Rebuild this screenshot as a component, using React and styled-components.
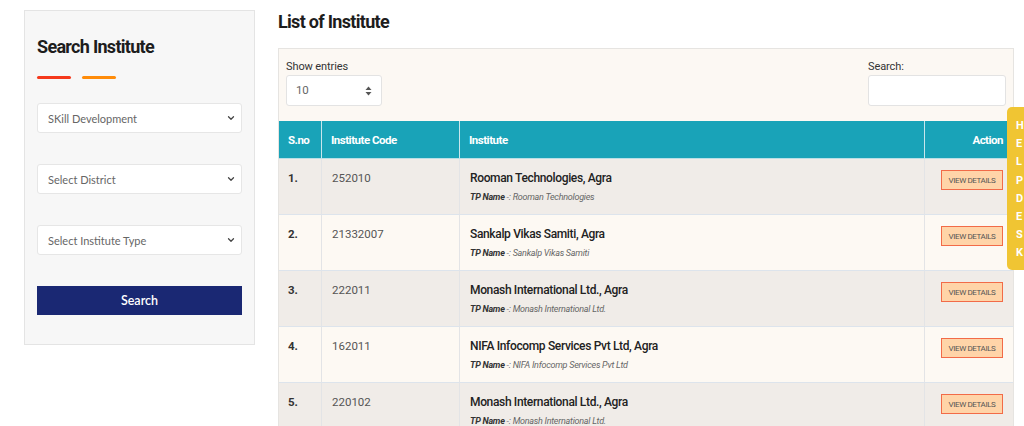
import React from "react";
import styled, { createGlobalStyle } from "styled-components";
import { ChevronDown } from "lucide-react";

const Global = createGlobalStyle`
  html, body { margin: 0; padding: 0; background: #fff; overflow: hidden; }
  body { font-family: Roboto, "Liberation Sans", sans-serif; color: #333; }
  * { box-sizing: border-box; }
`;

const Page = styled.div`
  display: flex;
  align-items: flex-start;
  gap: 23px;
  padding-left: 24px;
  width: 1024px;
`;

const Sidebar = styled.aside`
  margin-top: 10px;
  width: 231px;
  height: 335px;
  background: #f7f7f7;
  border: 1px solid #e4e4e4;
  padding: 25px 11px 0 12px;
  display: flex;
  flex-direction: column;
`;

const Heading = styled.h2`
  margin: 0;
  font-family: Roboto, sans-serif;
  font-weight: 700;
  font-size: 18px;
  line-height: 21px;
  letter-spacing: -0.7px;
  color: #1d1d1d;
`;

const Underlines = styled.div`
  display: flex;
  gap: 11px;
  margin-top: 19px;
  margin-bottom: 24px;
`;

const Dash = styled.span`
  display: block;
  width: 34px;
  height: 3px;
  border-radius: 2px;
  background: ${(p) => p.$color};
`;

const Fields = styled.div`
  display: flex;
  flex-direction: column;
  gap: 31px;
`;

const SelectWrap = styled.div`
  position: relative;
  width: 205px;
  height: 30px;
`;

const Select = styled.div`
  height: 30px;
  background: #fff;
  border: 1px solid #e6e6e6;
  border-radius: 3px;
  padding: 0 10px;
  display: flex;
  align-items: center;
  font-family: Lato, "Open Sans", sans-serif;
  font-size: 11px;
  color: #666;
`;

const Chevron = styled(ChevronDown)`
  position: absolute;
  right: 6px;
  top: 10px;
  color: #444;
`;

const SearchButton = styled.button`
  margin-top: 31px;
  width: 205px;
  height: 29px;
  border: none;
  background: #1a2873;
  color: #fff;
  font-family: Lato, "Open Sans", sans-serif;
  font-weight: 600;
  font-size: 12.5px;
  cursor: pointer;
`;

const Main = styled.main`
  width: 736px;
  padding-top: 11px;
`;

const Panel = styled.section`
  margin-top: 16px;
  background: #fcf8f3;
  border: 1px solid #e6e4e1;
  border-bottom: none;
`;

const Controls = styled.div`
  display: flex;
  justify-content: space-between;
  padding: 11px 7px 15px 7px;
`;

const Control = styled.label`
  display: flex;
  flex-direction: column;
  gap: 2px;
  font-size: 11px;
  line-height: 13px;
  color: #333;
  letter-spacing: -0.1px;
`;

const EntriesBox = styled.div`
  width: 96px;
  height: 31px;
  background: #fff;
  border: 1px solid #e3e3e3;
  border-radius: 3px;
  display: flex;
  align-items: center;
  justify-content: space-between;
  padding: 0 9px 0 9px;
  font-size: 11.5px;
  color: #666;
`;

const SearchBox = styled.div`
  width: 138px;
  height: 31px;
  background: #fff;
  border: 1px solid #e3e3e3;
  border-radius: 3px;
`;

const Table = styled.div`
  display: grid;
  grid-template-columns: 42px 138px 465px 89px;
`;

const HeadCell = styled.div`
  height: 38px;
  background: #19a3b8;
  color: #fff;
  font-weight: 700;
  font-size: 11.5px;
  letter-spacing: -0.5px;
  display: flex;
  align-items: center;
  justify-content: ${(p) => (p.$right ? "flex-end" : "flex-start")};
  padding: 0 10px 0 9px;
  border-left: ${(p) => (p.$first ? "none" : "1px solid #c9e6ec")};
  border-bottom: 1px solid #b9dfe6;
`;

const Cell = styled.div`
  height: 56px;
  background: ${(p) => (p.$odd ? "#f0ece8" : "#fdf9f3")};
  border-left: ${(p) => (p.$first ? "none" : "1px solid #e3e4e6")};
  border-bottom: 1px solid #dde4ec;
  padding: 12px 10px 0 ${(p) => (p.$first ? "9px" : "10px")};
  display: flex;
  flex-direction: column;
  align-items: ${(p) => (p.$right ? "flex-end" : "flex-start")};
  font-size: 11.5px;
  line-height: 14px;
  color: #555;
`;

const Serial = styled.span`
  font-weight: 700;
  color: #333;
`;

const Name = styled.span`
  font-weight: 500;
  font-size: 12px;
  letter-spacing: -0.35px;
  color: #222;
`;

const TpLine = styled.span`
  margin-top: 5px;
  font-size: 9px;
  font-style: italic;
  color: #666;
  letter-spacing: -0.25px;
  b { font-weight: 700; color: #333; }
`;

const ViewButton = styled.button`
  height: 20px;
  width: 62px;
  padding: 0;
  margin-top: -1px;
  background: #ffd4a8;
  border: 1px solid #f26b48;
  font-family: Roboto, sans-serif;
  font-size: 8px;
  letter-spacing: -0.4px;
  color: #555;
  cursor: pointer;
`;

const HelpTab = styled.div`
  position: fixed;
  top: 107px;
  left: 1007px;
  width: 30px;
  height: 163px;
  background: #f0c533;
  border-radius: 5px;
  padding: 10px 0 0 9px;
  display: flex;
  flex-direction: column;
  color: #fff;
  font-weight: 700;
  font-size: 11px;
  line-height: 18.2px;
`;

const SortIcon = () => (
  <svg width="7" height="10" viewBox="0 0 7 10">
    <path d="M3.5 0.5 L6.5 4 H0.5 Z" fill="#555" />
    <path d="M3.5 9.5 L6.5 6 H0.5 Z" fill="#555" />
  </svg>
);

const rows = [
  ["252010", "Rooman Technologies, Agra", "Rooman Technologies"],
  ["21332007", "Sankalp Vikas Samiti, Agra", "Sankalp Vikas Samiti"],
  ["222011", "Monash International Ltd., Agra", "Monash International Ltd."],
  ["162011", "NIFA Infocomp Services Pvt Ltd, Agra", "NIFA Infocomp Services Pvt Ltd"],
  ["220102", "Monash International Ltd., Agra", "Monash International Ltd."],
];

export default function App() {
  return (
    <>
      <Global />
      <Page>
        <Sidebar>
          <Heading>Search Institute</Heading>
          <Underlines>
            <Dash $color="#f5391c" />
            <Dash $color="#ff8c0a" />
          </Underlines>
          <Fields>
            {["SKill Development", "Select District", "Select Institute Type"].map((t) => (
              <SelectWrap key={t}>
                <Select>{t}</Select>
                <Chevron size={10} strokeWidth={3} />
              </SelectWrap>
            ))}
          </Fields>
          <SearchButton>Search</SearchButton>
        </Sidebar>
        <Main>
          <Heading>List of Institute</Heading>
          <Panel>
            <Controls>
              <Control>
                Show entries
                <EntriesBox>
                  10
                  <SortIcon />
                </EntriesBox>
              </Control>
              <Control>
                Search:
                <SearchBox />
              </Control>
            </Controls>
            <Table>
              <HeadCell $first>S.no</HeadCell>
              <HeadCell>Institute Code</HeadCell>
              <HeadCell>Institute</HeadCell>
              <HeadCell $right>Action</HeadCell>
              {rows.map(([code, name, tp], i) => {
                const odd = i % 2 === 0;
                return (
                  <React.Fragment key={i}>
                    <Cell $odd={odd} $first>
                      <Serial>{i + 1}.</Serial>
                    </Cell>
                    <Cell $odd={odd}>{code}</Cell>
                    <Cell $odd={odd}>
                      <Name>{name}</Name>
                      <TpLine>
                        <b>TP Name</b> -: {tp}
                      </TpLine>
                    </Cell>
                    <Cell $odd={odd} $right>
                      <ViewButton>VIEW DETAILS</ViewButton>
                    </Cell>
                  </React.Fragment>
                );
              })}
            </Table>
          </Panel>
        </Main>
      </Page>
      <HelpTab>
        {"HELPDESK".split("").map((c, i) => (
          <span key={i}>{c}</span>
        ))}
      </HelpTab>
    </>
  );
}
